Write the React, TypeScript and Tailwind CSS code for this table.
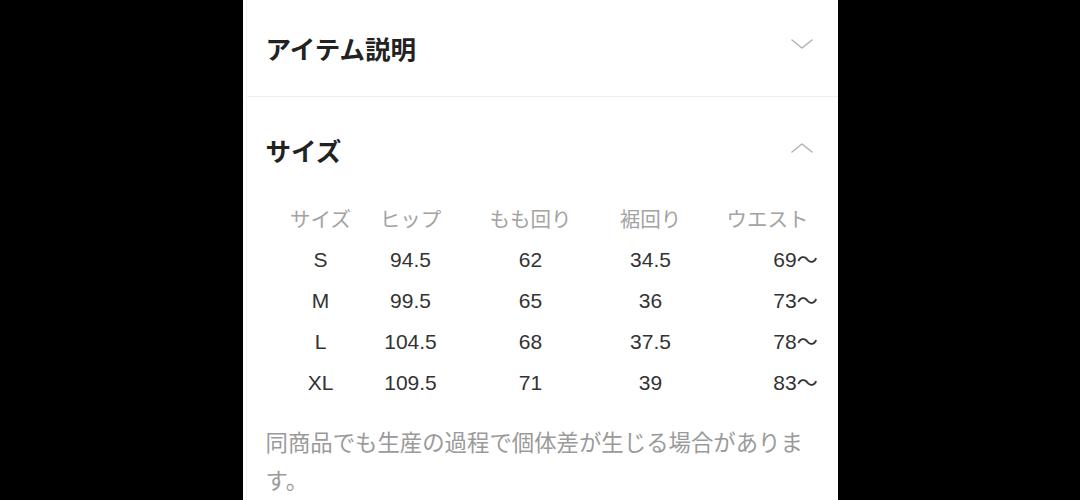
import React from "react";

const FONT = {
  fontFamily: '"Liberation Sans", "Noto Sans CJK JP", sans-serif',
};

type SizeRow = {
  size: string;
  hip: string;
  thigh: string;
  hem: string;
  waist: string;
};

const ROWS: SizeRow[] = [
  { size: "S", hip: "94.5", thigh: "62", hem: "34.5", waist: "69～" },
  { size: "M", hip: "99.5", thigh: "65", hem: "36", waist: "73～" },
  { size: "L", hip: "104.5", thigh: "68", hem: "37.5", waist: "78～" },
  { size: "XL", hip: "109.5", thigh: "71", hem: "39", waist: "83～" },
];

function Chevron({ up = false }: { up?: boolean }) {
  return (
    <svg
      width="22"
      height="10"
      viewBox="0 0 22 10"
      fill="none"
      stroke="#b4b4b4"
      strokeWidth={1.6}
      strokeLinecap="round"
      strokeLinejoin="round"
      className="shrink-0"
    >
      {up ? (
        <polyline points="1,9 11,1 21,9" />
      ) : (
        <polyline points="1,1 11,9 21,1" />
      )}
    </svg>
  );
}

function Cells({ row, header = false }: { row: SizeRow; header?: boolean }) {
  const tone = header
    ? "text-[20.5px] text-[#a3a3a3] font-['Noto_Sans_CJK_JP']"
    : "text-[21px] text-[#333333]";
  return (
    <div className={`flex h-[41px] items-center whitespace-nowrap ${tone}`}>
      <div className="w-[106px] shrink-0 text-center">{row.size}</div>
      <div className="w-[74px] shrink-0 text-center">{row.hip}</div>
      <div className="w-[166px] shrink-0 text-center">{row.thigh}</div>
      <div className="w-[74px] shrink-0 text-center">{row.hem}</div>
      {header ? (
        <div className="w-[216px] shrink-0 pl-[39px] text-left">{row.waist}</div>
      ) : (
        <div className="w-[216px] shrink-0 text-center">{row.waist}</div>
      )}
    </div>
  );
}

export default function App() {
  return (
    <div
      className="flex h-[500px] w-full justify-center overflow-hidden bg-black"
      style={FONT}
    >
      <div className="h-[500px] w-[595px] bg-white">
        <div className="ml-[3px] h-full border-l border-[#f3f3f3]">
          {/* アイテム説明 (collapsed) */}
          <div className="flex h-[97px] justify-between border-b border-[#efefef] pl-[19px] pr-[25px]">
            <h2 className="mt-[32px] text-[25.5px] leading-[36px] font-semibold text-[#222222]">
              アイテム説明
            </h2>
            <div className="mt-[39px]">
              <Chevron />
            </div>
          </div>

          {/* サイズ (open) */}
          <div className="pl-[19px] pr-[25px]">
            <div className="flex justify-between">
              <h2 className="mt-[37px] text-[25.5px] leading-[36px] font-semibold text-[#222222]">
                サイズ
              </h2>
              <div className="mt-[46px]">
                <Chevron up />
              </div>
            </div>

            <div className="mt-[28px] ml-[2px] w-[551px] overflow-hidden">
              <Cells
                header
                row={{
                  size: "サイズ",
                  hip: "ヒップ",
                  thigh: "もも回り",
                  hem: "裾回り",
                  waist: "ウエスト（cm）",
                }}
              />
              {ROWS.map((r) => (
                <Cells key={r.size} row={r} />
              ))}
            </div>

            <p className="mt-[19px] w-[553px] text-[22.4px] leading-[38px] text-[#9a9a9a] font-['Noto_Sans_CJK_JP']">
              同商品でも生産の過程で個体差が生じる場合があります。
            </p>
          </div>
        </div>
      </div>
    </div>
  );
}
